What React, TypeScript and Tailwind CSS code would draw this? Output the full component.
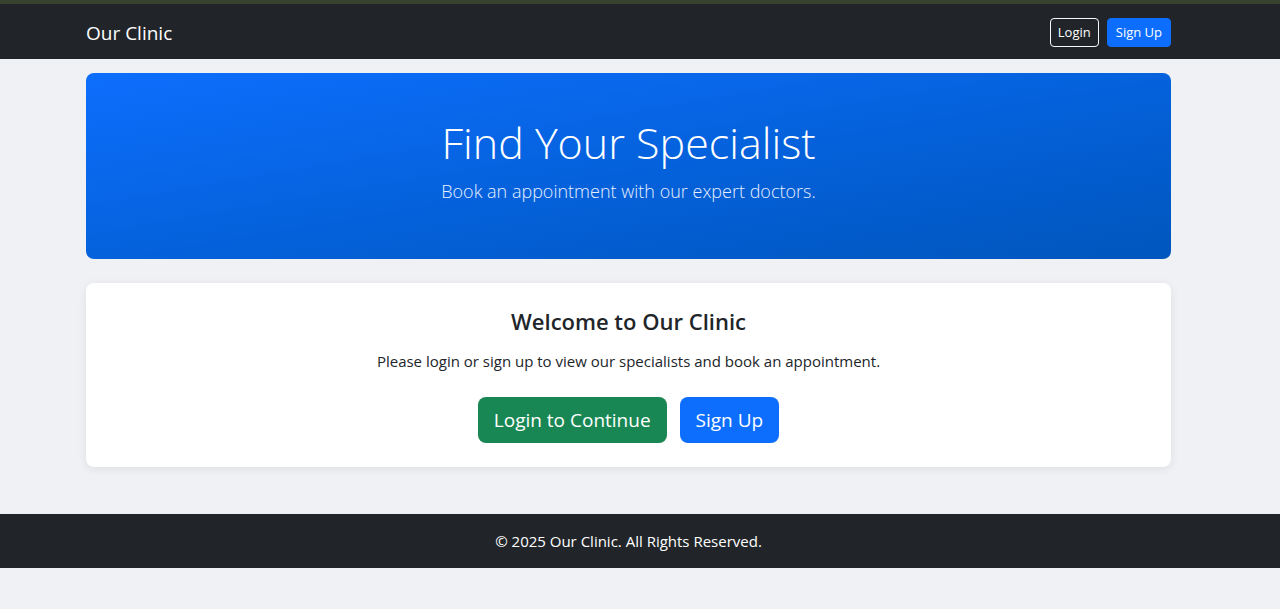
import React from 'react'

const font = { fontFamily: '"Open Sans", "Noto Sans", sans-serif' }

// the page was captured with a scrollbar, so content centres on 1257px, not 1280px
function Inner({ children, className = '' }: { children: React.ReactNode; className?: string }) {
  return (
    <div className="w-[1257px]">
      <div className={`mx-auto w-[1085px] ${className}`}>{children}</div>
    </div>
  )
}

function Navbar() {
  return (
    <header className="bg-[#212529]">
      <Inner className="flex h-[55px] items-center justify-between">
        <span className="mt-[3px] text-[19px] text-white">Our Clinic</span>
        <div className="mt-[2px] flex items-center gap-2">
          <button className="h-[29px] rounded border border-[#f8f9fa] px-[7px] text-[13px] text-white">Login</button>
          <button className="h-[29px] rounded border border-[#0d6efd] bg-[#0d6efd] px-[8px] text-[13px] text-white">Sign Up</button>
        </div>
      </Inner>
    </header>
  )
}

function Hero() {
  return (
    <section className="rounded-lg bg-gradient-to-br from-[#0d6efd] to-[#0056bd] pt-[41px] pb-[53px] text-center text-white">
      <h1 className="text-[43px] leading-[57px] font-light">Find Your Specialist</h1>
      <p className="mt-[5px] text-[18px] leading-[30px] font-light text-[#e6efff]">Book an appointment with our expert doctors.</p>
    </section>
  )
}

function Welcome() {
  return (
    <section className="mt-6 rounded-lg bg-white p-6 text-center shadow-[0_2px_10px_rgba(0,0,0,0.08)]">
      <h2 className="text-[22px] leading-[29px] font-semibold text-[#212529]">Welcome to Our Clinic</h2>
      <p className="mt-[13px] text-[15px] leading-[24px] text-[#212529]">
        Please login or sign up to view our specialists and book an appointment.
      </p>
      <div className="mt-[24px] flex justify-center gap-[13px]">
        <button className="h-[46px] rounded-lg bg-[#198754] px-4 text-[19px] text-white">Login to Continue</button>
        <button className="h-[46px] rounded-lg bg-[#0d6efd] px-4 text-[19px] text-white">Sign Up</button>
      </div>
    </section>
  )
}

export default function App() {
  return (
    <div className="min-h-[609px] bg-[#f0f1f5]" style={font}>
      <div className="h-[4px] bg-[#37432f]" />
      <Navbar />
      <Inner className="pt-[14px]">
        <Hero />
        <Welcome />
      </Inner>
      <footer className="mt-[47px] bg-[#212529]">
        <Inner className="flex h-[54px] items-center justify-center text-[15px] text-white">
          © 2025 Our Clinic. All Rights Reserved.
        </Inner>
      </footer>
    </div>
  )
}
